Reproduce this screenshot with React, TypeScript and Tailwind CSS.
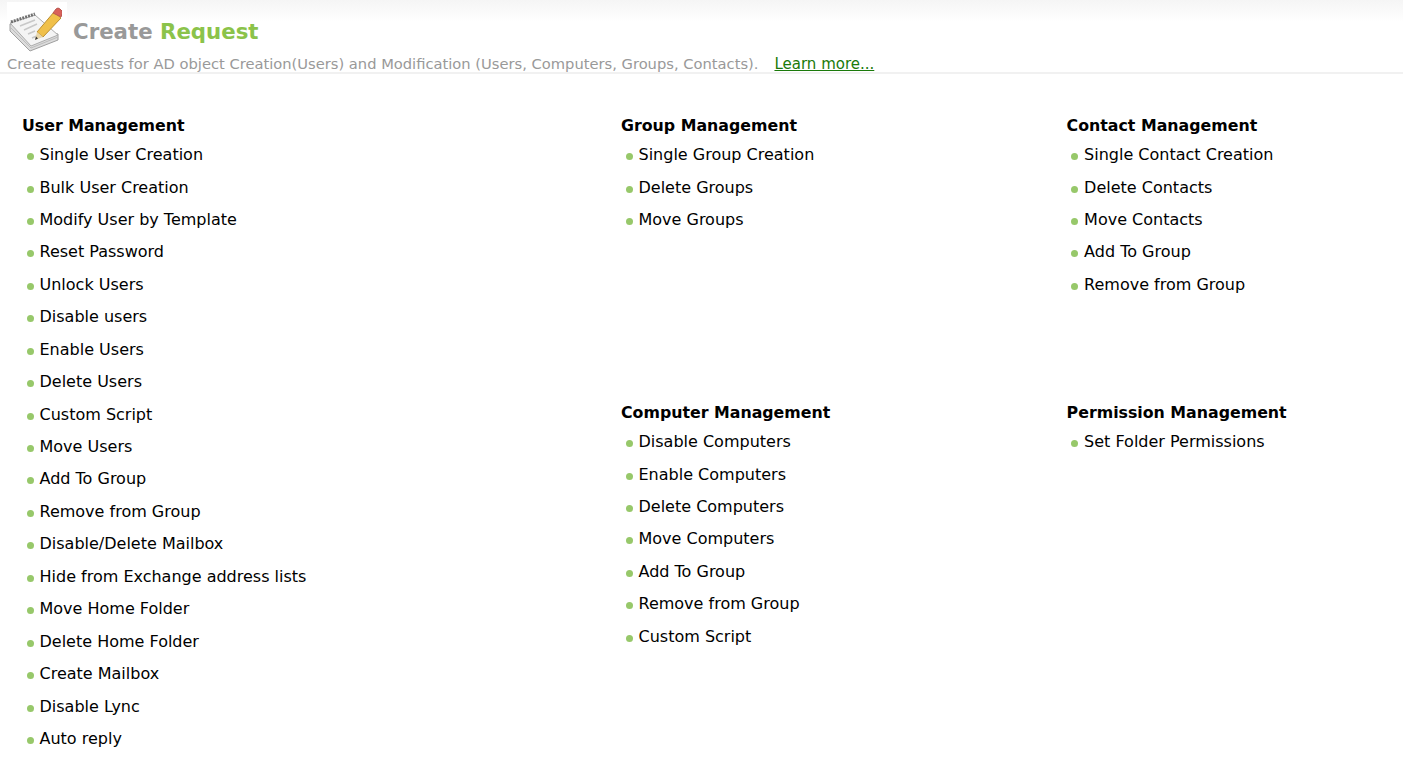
const COLUMN_LISTS = {
  user: [
    "Single User Creation",
    "Bulk User Creation",
    "Modify User by Template",
    "Reset Password",
    "Unlock Users",
    "Disable users",
    "Enable Users",
    "Delete Users",
    "Custom Script",
    "Move Users",
    "Add To Group",
    "Remove from Group",
    "Disable/Delete Mailbox",
    "Hide from Exchange address lists",
    "Move Home Folder",
    "Delete Home Folder",
    "Create Mailbox",
    "Disable Lync",
    "Auto reply",
  ],
  group: ["Single Group Creation", "Delete Groups", "Move Groups"],
  contact: [
    "Single Contact Creation",
    "Delete Contacts",
    "Move Contacts",
    "Add To Group",
    "Remove from Group",
  ],
  computer: [
    "Disable Computers",
    "Enable Computers",
    "Delete Computers",
    "Move Computers",
    "Add To Group",
    "Remove from Group",
    "Custom Script",
  ],
  permission: ["Set Folder Permissions"],
};

function NotepadIcon() {
  return (
    <svg width="54" height="48" viewBox="0 0 54 48" className="shrink-0">
      <path d="M2 19 L2 26 L22 46 L50 35 L50 29 Z" fill="#dcdcdc" stroke="#a0a0a0" />
      <path d="M2 18 L27 10 L50 30 L23 41 Z" fill="#f4f4f4" stroke="#adadad" />
      <path d="M2 22 L23 43 L50 32" fill="none" stroke="#bcbcbc" />
      <path d="M3 17 L27 9" stroke="#707070" strokeWidth="3" strokeDasharray="2 1" />
      <path d="M12 21 L27 15 M16 25 L29 19 M20 29 L27 26 M24 33 L31 30" stroke="#c8c8c8" strokeWidth="1.5" />
      <path d="M29 27 L46 7 L53 13 L35 32 Z" fill="#f0c04a" stroke="#bd9032" />
      <path d="M45 8 L48 4 Q50 2 52 4 L54 6 Q55 8 53 12 Z" fill="#d9605a" stroke="#b85850" />
      <path d="M29 27 L35 32 L27 35 Z" fill="#e9d6a8" />
      <path d="M28 31.5 L30 33.5 L27 35 Z" fill="#333" />
    </svg>
  );
}

function Section({ title, items }: { title: string; items: string[] }) {
  return (
    <div>
      <h3 className="text-[15.8px] font-bold leading-[20px] text-black">{title}</h3>
      <ul className="mt-[2.9px]">
        {items.map((item) => (
          <li key={item} className="flex h-[32.45px] items-center text-[16px] leading-[20px] text-black">
            <span className="ml-[4.5px] mr-[6px] mt-[3px] h-[7px] w-[7px] shrink-0 rounded-full bg-[#97c86a]"></span>
            {item}
          </li>
        ))}
      </ul>
    </div>
  );
}

export default function App() {
  return (
    <div className="h-[773px] overflow-hidden bg-white font-['DejaVu_Sans',Verdana,sans-serif]">
      <div className="h-[74px] border-b-2 border-[#f1f1f1] bg-gradient-to-b from-[#f5f5f5] to-white to-[30%] pl-[7px]">
        <div className="flex h-[54px] items-start">
          <div className="mt-[2px] bg-white pb-[1px] pl-[1px] pr-[5px] pt-[3px]">
            <NotepadIcon />
          </div>
          <h1 className="ml-[6px] mt-[16px] text-[21.3px] font-bold leading-[32px] text-[#999999]">
            Create <span className="text-[#8bc34a]">Request</span>
          </h1>
        </div>
        <p className="text-[14.7px] leading-[20px] text-[#999999]">
          Create requests for AD object Creation(Users) and Modification (Users, Computers, Groups, Contacts).
          <a className="ml-4 text-[15px] text-[#1a7a0a] underline">Learn more...</a>
        </p>
      </div>
      <div className="flex pt-[42px]">
        <div className="ml-[22px] w-[599px]">
          <Section title="User Management" items={COLUMN_LISTS.user} />
        </div>
        <div className="w-[445.6px]">
          <div className="h-[287px]">
            <Section title="Group Management" items={COLUMN_LISTS.group} />
          </div>
          <Section title="Computer Management" items={COLUMN_LISTS.computer} />
        </div>
        <div>
          <div className="h-[287px]">
            <Section title="Contact Management" items={COLUMN_LISTS.contact} />
          </div>
          <Section title="Permission Management" items={COLUMN_LISTS.permission} />
        </div>
      </div>
    </div>
  );
}
